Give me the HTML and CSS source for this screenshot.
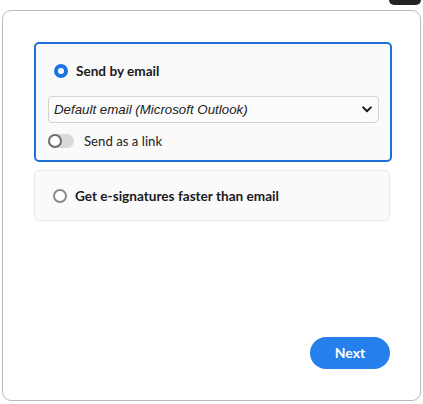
FILE: index.html
```html
<!DOCTYPE html>
<html>
<head>
<meta charset="utf-8">
<link rel="stylesheet" href="styles.css">
</head>
<body>
<div class="topbar"><div class="pill"></div></div>
<div class="dialog">
  <div class="card card-active">
    <div class="option">
      <span class="radio radio-on"></span>
      <span class="label">Send by email</span>
    </div>
    <div class="select">
      <span class="select-text">Default email (Microsoft Outlook)</span>
      <svg class="chev" width="10" height="7" viewBox="0 0 10 7"><path d="M1.2 1.4 L5 5.2 L8.8 1.4" fill="none" stroke="#1a1a1a" stroke-width="2" stroke-linecap="round" stroke-linejoin="round"/></svg>
    </div>
    <div class="toggle-row">
      <span class="toggle"><span class="knob"></span></span>
      <span class="toggle-label">Send as a link</span>
    </div>
  </div>
  <div class="card card-plain">
    <div class="option">
      <span class="radio"></span>
      <span class="label">Get e-signatures faster than email</span>
    </div>
  </div>
  <button class="next">Next</button>
</div>
</body>
</html>
```
FILE: styles.css
```css
html, body { margin: 0; padding: 0; background: #fff; }
body { font-family: Lato, "Noto Sans", sans-serif; color: #1d1d1d; width: 423px; height: 404px; overflow: hidden; }
.topbar { display: flex; justify-content: flex-end; height: 4px; padding-right: 2px; }
.pill { width: 32px; height: 5px; background: #232323; border-radius: 0 0 5px 5px; }
.dialog {
  box-sizing: border-box;
  margin: 6px 2px 0 2px;
  width: 419px; height: 391px;
  border: 1px solid #b9b9b9;
  border-radius: 9px;
  background: #fff;
  padding: 31px 30px 30px 31px;
  display: flex; flex-direction: column; gap: 8px;
}
.card { box-sizing: border-box; background: #fafafa; border-radius: 5px; }
.card-active { width: 358px; height: 120px; border: 2px solid #1e6fd6; padding: 17px 12px 0 12px; display: flex; flex-direction: column; }
.card-plain { width: 356px; height: 51px; border: 1px solid #e9e9e9; padding: 0 0 0 18px; display: flex; align-items: center; }
.option { display: flex; align-items: center; gap: 8px; height: 20px; }
.card-active .option { margin-left: 6px; }
.radio { box-sizing: border-box; width: 14px; height: 14px; border-radius: 50%; border: 2px solid #8a8a8a; background: #fff; }
.radio-on { border: 4.5px solid #1f74e0; background: #fff; }
.label { font-weight: 700; font-size: 13.6px; color: #1b1b1b; }
.select {
  box-sizing: border-box; margin-top: 15px; height: 27px; width: 331px;
  border: 1px solid #d3d3d3; border-radius: 4px; background: #fbfbfb;
  display: flex; align-items: center; justify-content: space-between; padding: 0 6px 0 5px;
}
.select-text { font-family: "Liberation Sans", Arial, sans-serif; font-style: italic; font-size: 13.3px; color: #222; }
.toggle-row { display: flex; align-items: center; gap: 10px; margin-top: 10px; }
.toggle { box-sizing: border-box; width: 26px; height: 14px; border-radius: 7px; background: #d9d9d9; display: flex; align-items: center; }
.knob { box-sizing: border-box; width: 14px; height: 14px; border-radius: 50%; border: 2px solid #6e6e6e; background: #fff; }
.toggle-label { font-size: 13.2px; color: #222; }
.next {
  margin-top: auto; align-self: flex-end;
  width: 80px; height: 32px; border: none; border-radius: 16px;
  background: #2680eb; color: #fff; font-family: Lato, sans-serif; font-weight: 700; font-size: 14px;
  padding: 0 0 2px 0; margin-bottom: 1px;
}
```
